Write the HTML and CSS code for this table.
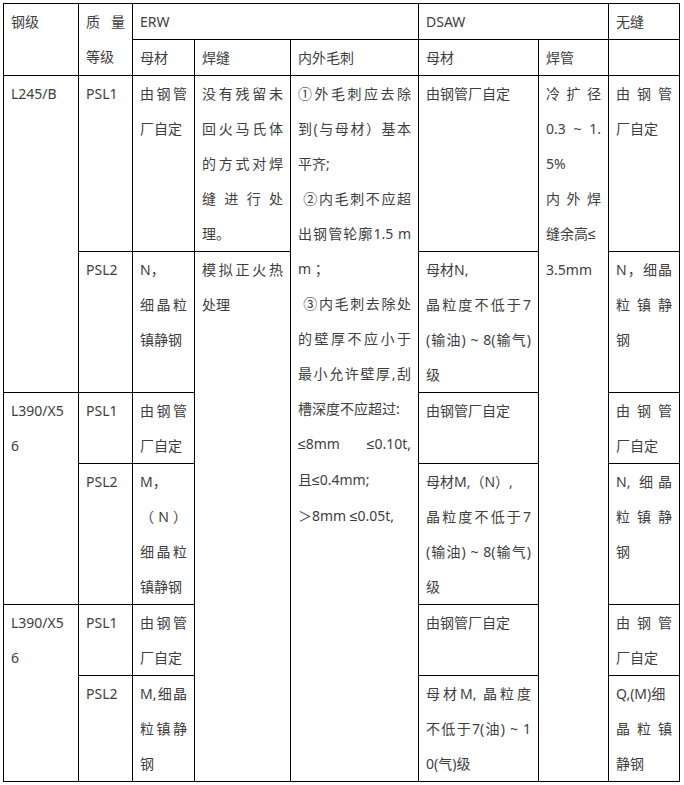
FILE: index.html
```html
<!DOCTYPE html>
<html lang="zh-CN">
<head>
<meta charset="utf-8">
<title>钢级表</title>
<link rel="stylesheet" href="styles.css">
</head>
<body>
<table class="spec">
  <colgroup>
    <col class="c0"><col class="c1"><col class="c2"><col class="c3"><col class="c4"><col class="c5"><col class="c6"><col class="c7">
  </colgroup>
  <tbody>
    <tr>
      <td rowspan="2"><span class="l">钢级</span></td>
      <td rowspan="2"><span class="l j">质量</span><span class="l">等级</span></td>
      <td colspan="3"><span class="l">ERW</span></td>
      <td colspan="2"><span class="l">DSAW</span></td>
      <td><span class="l">无缝</span></td>
    </tr>
    <tr>
      <td><span class="l">母材</span></td>
      <td><span class="l">焊缝</span></td>
      <td><span class="l">内外毛刺</span></td>
      <td><span class="l">母材</span></td>
      <td><span class="l">焊管</span></td>
      <td></td>
    </tr>
    <tr>
      <td rowspan="2"><span class="l">L245/B</span></td>
      <td><span class="l">PSL1</span></td>
      <td><span class="l j">由钢管</span><span class="l">厂自定</span></td>
      <td><span class="l j">没有残留未</span><span class="l j">回火马氏体</span><span class="l j">的方式对焊</span><span class="l j">缝进行处</span><span class="l">理。</span></td>
      <td rowspan="6">
        <span class="l j">①外毛刺应去除</span>
        <span class="l j">到(与母材）基本</span>
        <span class="l">平齐;</span>
        <span class="l j">&nbsp;②内毛刺不应超</span>
        <span class="l j">出钢管轮廓1.5 m</span>
        <span class="l">m ；</span>
        <span class="l j">&nbsp;③内毛刺去除处</span>
        <span class="l j">的壁厚不应小于</span>
        <span class="l j">最小允许壁厚,刮</span>
        <span class="l">槽深度不应超过:</span>
        <span class="l j"><span class="sym">≤</span>8mm &nbsp; <span class="sym">≤</span>0.10t,</span>
        <span class="l">且<span class="sym">≤</span>0.4mm;</span>
        <span class="l">＞8mm <span class="sym">≤</span>0.05t,</span>
      </td>
      <td><span class="l">由钢管厂自定</span></td>
      <td rowspan="6">
        <span class="l j">冷扩径</span>
        <span class="l j">0.3 ~ 1.</span>
        <span class="l">5%</span>
        <span class="l j">内外焊</span>
        <span class="l">缝余高<span class="sym">≤</span></span>
        <span class="l">3.5mm</span>
      </td>
      <td><span class="l j">由钢管</span><span class="l">厂自定</span></td>
    </tr>
    <tr>
      <td><span class="l">PSL2</span></td>
      <td><span class="l">N，</span><span class="l j">细晶粒</span><span class="l">镇静钢</span></td>
      <td rowspan="5"><span class="l j">模拟正火热</span><span class="l">处理</span></td>
      <td><span class="l">母材N,</span><span class="l j">晶粒度不低于7</span><span class="l j">(输油) ~ 8(输气)</span><span class="l">级</span></td>
      <td><span class="l j">N，细晶</span><span class="l j">粒镇静</span><span class="l">钢</span></td>
    </tr>
    <tr>
      <td rowspan="2"><span class="l">L390/X5</span><span class="l">6</span></td>
      <td><span class="l">PSL1</span></td>
      <td><span class="l j">由钢管</span><span class="l">厂自定</span></td>
      <td><span class="l">由钢管厂自定</span></td>
      <td><span class="l j">由钢管</span><span class="l">厂自定</span></td>
    </tr>
    <tr>
      <td><span class="l">PSL2</span></td>
      <td><span class="l">M，</span><span class="l j">（N）</span><span class="l j">细晶粒</span><span class="l">镇静钢</span></td>
      <td><span class="l">母材M,（N）,</span><span class="l j">晶粒度不低于7</span><span class="l j">(输油) ~ 8(输气)</span><span class="l">级</span></td>
      <td><span class="l j">N, 细晶</span><span class="l j">粒镇静</span><span class="l">钢</span></td>
    </tr>
    <tr>
      <td rowspan="2"><span class="l">L390/X5</span><span class="l">6</span></td>
      <td><span class="l">PSL1</span></td>
      <td><span class="l j">由钢管</span><span class="l">厂自定</span></td>
      <td><span class="l">由钢管厂自定</span></td>
      <td><span class="l j">由钢管</span><span class="l">厂自定</span></td>
    </tr>
    <tr>
      <td><span class="l">PSL2</span></td>
      <td><span class="l j">M,细晶</span><span class="l j">粒镇静</span><span class="l">钢</span></td>
      <td><span class="l j">母材M, 晶粒度</span><span class="l j">不低于7(油) ~ 1</span><span class="l">0(气)级</span></td>
      <td><span class="l">Q,(M)细</span><span class="l j">晶粒镇</span><span class="l">静钢</span></td>
    </tr>
  </tbody>
</table>
</body>
</html>
```
FILE: styles.css
```css
html, body {
  margin: 0;
  padding: 0;
  background: #ffffff;
}

body {
  padding: 3px 0 0 3px;
  font-family: "Noto Sans", "Noto Sans CJK SC", sans-serif;
  font-size: 14px;
  color: #3e3e3e;
}

.spec {
  border-collapse: collapse;
  table-layout: fixed;
  width: 676px;
}

.c0 { width: 75px; }
.c1 { width: 54px; }
.c2 { width: 62px; }
.c3 { width: 96px; }
.c4 { width: 128px; }
.c5 { width: 120px; }
.c6 { width: 70px; }
.c7 { width: 71px; }

.spec td {
  border: 1px solid #000000;
  padding: 0 7px;
  vertical-align: top;
  line-height: 35px;
  word-break: keep-all;
}

.l {
  display: block;
  white-space: nowrap;
  text-align: left;
}

.l.j {
  text-align: justify;
  text-align-last: justify;
}

.sym {
  font-family: "Liberation Sans", sans-serif;
}
```
